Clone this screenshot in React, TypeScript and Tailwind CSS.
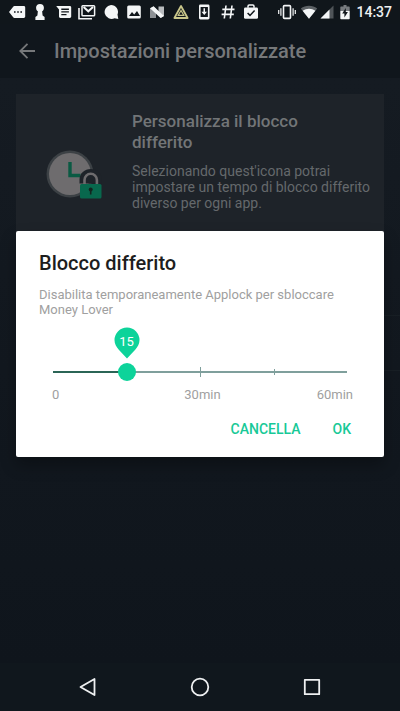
import { useState, type ReactNode } from 'react'

function StatusIcon({ children }: { children: ReactNode }) {
  return (
    <svg viewBox="0 0 18 18" className="size-[18px] shrink-0" fill="#f4f6f7" aria-hidden="true">
      {children}
    </svg>
  )
}

function StatusBar() {
  return (
    <div className="flex h-6 items-center justify-between bg-[#10161b] px-2">
      <div className="flex w-[252px] items-center justify-between">
        <StatusIcon>
          <path d="M1 9l4.2-5.300c.3-.4.7-.6 1.200-.6h9.400c.8 0 1.400.6 1.400 1.400v9c0 .8-.6 1.400-1.400 1.400H6.400c-.5 0-.9-.2-1.200-.6z" />
          <path d="M6 8.200h1.600v1.600H6zM9.200 8.200h1.600v1.600H9.200zM12.400 8.200H14v1.600h-1.600z" fill="#10161b" />
        </StatusIcon>
        <StatusIcon>
          <circle cx="9" cy="4.800" r="3.900" />
          <path d="M7 7h4l.6 5.500 2 1.500v3H4.400v-3l2-1.500z" />
        </StatusIcon>
        <StatusIcon>
          <path d="M1.200 3h13.600c.8 0 1.400.6 1.400 1.400v9.200c0 .8-.6 1.400-1.400 1.400H5.400c-.8 0-1.400-.6-1.400-1.400V6.500z" />
          <path d="M6.300 5.600h7.600v1.300H6.300zM6.300 8.300h7.600v1.300H6.300zM6.300 11h5.200v1.300H6.300z" fill="#10161b" />
        </StatusIcon>
        <StatusIcon>
          <path d="M1 5v10.800h13" fill="none" stroke="#f4f6f7" strokeWidth="1.600" />
          <rect x="4" y="2.800" width="12.600" height="10" rx=".8" fill="none" stroke="#f4f6f7" strokeWidth="1.500" />
          <path d="M5.600 4l4.700 4.300L15 4" fill="none" stroke="#f4f6f7" strokeWidth="2" />
        </StatusIcon>
        <StatusIcon>
          <path d="M9 2a7 7 0 0 1 6.500 9.600l.8 4.500-3.700-.8A7 7 0 1 1 9 2z" />
        </StatusIcon>
        <StatusIcon>
          <rect x="2.200" y="2.600" width="13.600" height="13" rx="1.500" />
          <path d="M4 13l3-4 2.200 2.600L12 8l3 5z" fill="#10161b" />
        </StatusIcon>
        <StatusIcon>
          <path d="M2 5.500l3.500-2L8 6v9H2z" fill="#8d9195" />
          <path d="M10.500 3.500H16V13l-3 1.800-2.500-2.500z" fill="#b8bbbe" />
          <path d="M2 5.200l3.600-2L16 13l-3.400 2z" />
        </StatusIcon>
        <StatusIcon>
          <path d="M9 3L2.400 15h13.200z" fill="none" stroke="#c9c68a" strokeWidth="1.800" strokeLinejoin="round" />
          <path d="M9 7.500l-2.800 4.800h5.600z" fill="none" stroke="#c9c68a" strokeWidth="1.200" />
        </StatusIcon>
        <StatusIcon>
          <rect x="4" y="1.500" width="10.500" height="15" rx="1.400" />
          <path d="M5.600 4h7.300v10H5.600z" fill="#10161b" />
          <path d="M8.500 5.300h1.500v3.400h2L9.250 12 6.500 8.700h2z" />
        </StatusIcon>
        <StatusIcon>
          <path d="M7 2.500l-1.700 13M13 2.500l-1.700 13M3.300 6.400h12.200M2.600 11.400h12.200" fill="none" stroke="#f4f6f7" strokeWidth="1.600" />
        </StatusIcon>
        <StatusIcon>
          <path d="M6 4.800V3.200c0-.7.500-1.200 1.200-1.200h3.600c.7 0 1.200.5 1.200 1.200v1.600" fill="none" stroke="#f4f6f7" strokeWidth="1.500" />
          <rect x="2" y="4.600" width="14" height="11.200" rx="1.400" />
          <path d="M5.600 10l2.400 2.400 4.600-4.800" fill="none" stroke="#10161b" strokeWidth="1.500" />
        </StatusIcon>
      </div>
      <div className="flex items-center">
        <div className="mr-1 flex">
          <StatusIcon>
            <rect x="5.500" y="2.600" width="7" height="12.800" rx="1" fill="none" stroke="#f4f6f7" strokeWidth="1.600" />
            <path d="M2.900 5.200v7.600M15.100 5.200v7.600M.7 7v4M17.300 7v4" stroke="#f4f6f7" strokeWidth="1.200" />
          </StatusIcon>
        </div>
        <StatusIcon>
          <path d="M9 15.800L.8 5.500C5.500 1.800 12.500 1.800 17.200 5.500z" fill="#5c6165" />
          <path d="M9 15.800L2.600 7.700c3.800-2.700 9-2.700 12.800 0z" />
        </StatusIcon>
        <StatusIcon>
          <path d="M15.500 2.500v13H2.500z" fill="#4f5458" />
          <path d="M11.500 6.500v9h-9z" />
        </StatusIcon>
        <StatusIcon>
          <path d="M7.500 2h3v1.500H13c.4 0 .7.300.7.700V8H4.300V4.200c0-.4.300-.7.700-.7h2.500z" fill="#777b7f" />
          <path d="M4.300 8h9.400v7.500c0 .4-.3.700-.7.700H5c-.4 0-.7-.3-.7-.7z" />
          <path d="M9.800 5L6.200 10.500h2.200V14.500l3.500-5.500H9.800z" fill="#10161b" />
        </StatusIcon>
        <span className="ml-[2px] text-sm font-medium text-[#eef0f1]">14:37</span>
      </div>
    </div>
  )
}

function ClockLockIcon() {
  return (
    <svg viewBox="0 0 60 54" className="h-[54px] w-[60px] shrink-0" aria-hidden="true">
      <circle cx="26" cy="26" r="23.500" fill="#3c4145" />
      <circle cx="26" cy="26" r="21" fill="#6e6c6e" />
      <path d="M26 14v13.500h10.500" fill="none" stroke="#0a5a43" strokeWidth="3.400" />
      <path d="M35.500 35.500v-4a11.200 10.500 0 0 1 22.400 0v4z" fill="#1e2329" />
      <path d="M40.500 37v-5a6.200 6.200 0 0 1 12.400 0v5" fill="none" stroke="#6e6c6e" strokeWidth="2.600" />
      <rect x="36" y="36" width="21.500" height="14.500" rx="1.500" fill="#08684d" />
      <circle cx="46.700" cy="41.500" r="2" fill="#13251f" />
      <path d="M45.900 41.500h1.600v5h-1.600z" fill="#13251f" />
    </svg>
  )
}

function DelayDialog() {
  const [minutes, setMinutes] = useState(15)
  const percent = (minutes / 60) * 100

  return (
    <div
      role="dialog"
      aria-labelledby="delay-title"
      className="w-full rounded-xs bg-white px-[23px] pt-[19px] pb-[10px] shadow-[0_8px_16px_rgba(0,0,0,0.3)]"
    >
      <h2 id="delay-title" className="text-xl leading-[26px] font-medium text-[#1d1d1d]">
        Blocco differito
      </h2>
      <p className="mt-[11px] text-[13px] leading-[15px] text-[#a0a0a0]">
        Disabilita temporaneamente Applock per sbloccare Money Lover
      </p>

      <div className="relative mx-[14px] mt-[46px] h-[18px]">
        <div className="absolute inset-x-0 top-2 h-[2px] bg-[#7f9f9c]" />
        <div className="absolute left-0 top-2 h-[2px] bg-[#2b6556]" style={{ width: `${percent}%` }} />
        <div className="absolute left-1/2 top-1 h-[10px] w-px bg-[#7f9f9c]" />
        <div className="absolute left-3/4 top-[6px] h-[6px] w-px bg-[#7f9f9c]" />
        <input
          type="range"
          min={0}
          max={60}
          step={15}
          value={minutes}
          onChange={(e) => setMinutes(Number(e.target.value))}
          aria-labelledby="delay-title"
          className="absolute inset-y-0 -left-[9px] w-[calc(100%+18px)] cursor-pointer appearance-none bg-transparent [&::-webkit-slider-thumb]:size-[18px] [&::-webkit-slider-thumb]:appearance-none [&::-webkit-slider-thumb]:rounded-full [&::-webkit-slider-thumb]:bg-[#0dd39a]"
        />
        <output
          className="absolute bottom-[22px] flex h-[32px] w-[26px] -translate-x-1/2 justify-center text-[13px] leading-[30px] text-white"
          style={{ left: `${percent}%` }}
        >
          <svg viewBox="0 0 26 32" className="absolute inset-0 h-full w-full" aria-hidden="true">
            <path d="M13 .5a12.500 12.500 0 0 1 12.500 12.500c0 4-1.800 7-4.300 9.700L13 31.500l-8.200-8.800C2.300 20 .5 17 .5 13A12.500 12.500 0 0 1 13 .5z" fill="#0dd39a" />
          </svg>
          <span className="relative">{minutes}</span>
        </output>
      </div>

      <div className="mt-[6px] mr-2 ml-[13px] grid grid-cols-3 text-[13px] leading-4 text-[#a0a0a0]">
        <span>0</span>
        <span className="text-center">30min</span>
        <span className="text-right">60min</span>
      </div>

      <div className="mt-2 flex justify-end text-sm font-medium text-[#18c997]">
        <button type="button" className="px-4 py-2 leading-5">CANCELLA</button>
        <button type="button" className="py-2 pr-[10px] pl-4 leading-5">OK</button>
      </div>
    </div>
  )
}

function NavigationBar() {
  return (
    <nav className="flex h-12 items-center justify-center bg-[#10171d] text-[#eef0f1]">
      <button type="button" aria-label="Indietro" className="flex w-28 justify-center">
        <svg viewBox="0 0 20 20" className="size-5" fill="none" stroke="currentColor" strokeWidth="1.800" strokeLinejoin="round">
          <path d="M16.500 2v16L2.500 10z" />
        </svg>
      </button>
      <button type="button" aria-label="Home" className="flex w-28 justify-center">
        <svg viewBox="0 0 20 20" className="size-5" fill="none" stroke="currentColor" strokeWidth="1.800">
          <circle cx="10" cy="10" r="8.300" />
        </svg>
      </button>
      <button type="button" aria-label="Recenti" className="flex w-28 justify-center">
        <svg viewBox="0 0 20 20" className="size-5" fill="none" stroke="currentColor" strokeWidth="1.800" strokeLinejoin="round">
          <path d="M2.800 2.800h14.400v14.400H2.800z" />
        </svg>
      </button>
    </nav>
  )
}

export default function App() {
  return (
    <div className="relative flex min-h-screen flex-col bg-[#10161d] font-[Roboto,sans-serif]">
      <StatusBar />

      <header className="flex h-[54px] items-center bg-[#10161c] px-[18px] text-[#76787a]">
        <button type="button" aria-label="Torna indietro">
          <svg viewBox="0 0 18 18" className="size-[18px]" fill="none" stroke="currentColor" strokeWidth="1.800">
            <path d="M17 9H2.500M9.500 1.800L2.300 9l7.200 7.200" />
          </svg>
        </button>
        <h1 className="ml-[18px] text-xl font-medium">Impostazioni personalizzate</h1>
      </header>

      <main className="flex-1 bg-linear-to-b from-[#151b22] to-[#0f151c] pt-4">
        <section className="mx-4 flex items-center bg-[#1e2329] pt-[17px] pr-3 pb-9">
          <div className="flex w-[116px] shrink-0 justify-center pt-7">
            <ClockLockIcon />
          </div>
          <div>
            <h2 className="text-[17px] leading-[21px] font-medium text-[#727577]">
              Personalizza il blocco
              <br />
              differito
            </h2>
            <p className="mt-[10px] text-sm leading-4 text-[#65696c]">
              Selezionando quest'icona potrai impostare un tempo di blocco differito diverso per ogni app.
            </p>
          </div>
        </section>
        <div className="mt-[14px] ml-16">
          <div className="h-[55px] border-b border-[#181f25]" />
          <div className="h-[55px] border-b border-[#181f25]" />
        </div>
      </main>

      <div className="absolute inset-x-0 top-6 bottom-12 flex items-center px-4">
        <DelayDialog />
      </div>

      <NavigationBar />
    </div>
  )
}
